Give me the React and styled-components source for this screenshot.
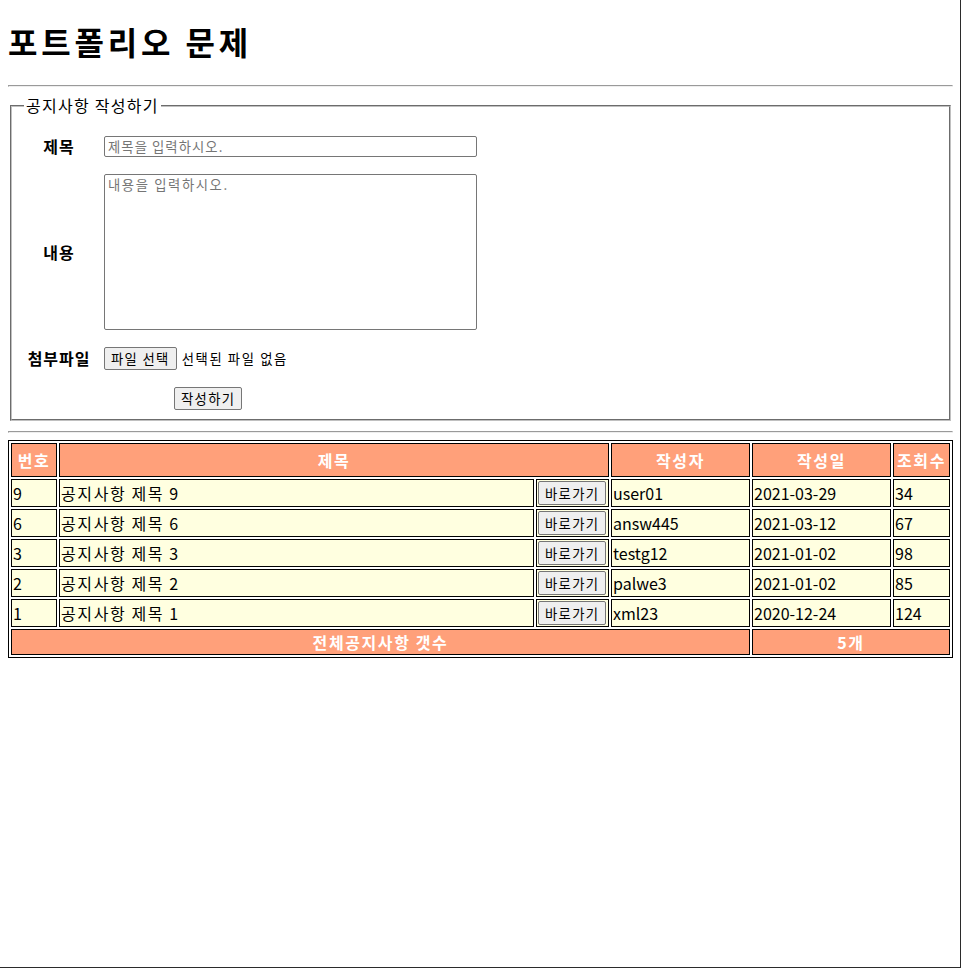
import React from 'react';
import styled, {createGlobalStyle} from 'styled-components';

const GlobalStyle = createGlobalStyle`
    html, body {
        margin: 0;
        padding: 0;
        background: #fff;
        overflow: hidden;
    }
    body {
        font-family: "Noto Sans CJK KR", "Noto Sans", sans-serif;
        font-size: 16px;
        line-height: 1.33;
        letter-spacing: 0.1em;
        color: #000;
    }
`;

const Page = styled.div`
    box-sizing: border-box;
    min-height: 100vh;
    padding: 0 7px 0 8px;
    border-right: 1px solid #2b2b2b;
    border-bottom: 1px solid #2b2b2b;
    display: flow-root;
`;

const Title = styled.h1`
    margin: 20px 0 22px;
    font-size: 32px;
    line-height: 43px;
    font-weight: bold;
    letter-spacing: 0.12em;
`;

const Divider = styled.hr`
    margin: ${({$gap}) => $gap || '8px 0'};
    border: 1px inset;
    color: gray;
    height: 0;
`;

const Fieldset = styled.fieldset`
    margin: 0 2px;
    padding: 20px 12px 9px;
    border: 2px groove #c0c0c0;
`;

const Legend = styled.legend`
    padding: 0 2px;
    font-size: 16px;
    line-height: 21px;
    letter-spacing: 0.08em;
`;

const FormGrid = styled.div`
    display: grid;
    grid-template-columns: 66px auto;
    justify-content: start;
    align-items: center;
    column-gap: 12px;
    row-gap: 17px;
    padding-left: 2px;
`;

const Label = styled.div`
    font-weight: bold;
    text-align: center;
    font-size: 16px;
    letter-spacing: 0.06em;
`;

const TextInput = styled.input`
    box-sizing: border-box;
    width: 373px;
    height: 21px;
    padding: 1px 3px;
    border: 1px solid #767676;
    border-radius: 2px;
    font-family: "Noto Sans CJK KR", sans-serif;
    font-size: 13.33px;
    letter-spacing: 0.08em;
    &::placeholder { color: #757575; }
`;

const TextArea = styled.textarea`
    box-sizing: border-box;
    width: 373px;
    height: 156px;
    padding: 2px 3px;
    border: 1px solid #767676;
    border-radius: 2px;
    font-family: "Noto Sans CJK KR", monospace;
    font-size: 13.33px;
    letter-spacing: 1.6px;
    line-height: 1.2;
    resize: none;
    &::placeholder { color: #757575; }
`;

const FileRow = styled.div`
    display: flex;
    align-items: center;
    gap: 5px;
    font-size: 13.33px;
`;

const Button = styled.button`
    box-sizing: border-box;
    height: ${({$h}) => $h || '23px'};
    padding: 0 ${({$px}) => $px || '6px'};
    margin-left: ${({$offset}) => $offset || '0'};
    background: #efefef;
    border: 1px solid #767676;
    border-radius: 2px;
    font-family: "Noto Sans CJK KR", sans-serif;
    font-size: 13.33px;
    letter-spacing: 0.1em;
    line-height: 1;
    color: #000;
    cursor: pointer;
`;

const Board = styled.div`
    display: grid;
    grid-template-columns: 46px 1fr 73px 139px 139px 57px;
    gap: 2px;
    padding: 2px;
    border: 1px solid #000;
`;

const Cell = styled.div`
    box-sizing: border-box;
    height: 28px;
    padding: 0 1px;
    border: 1px solid #000;
    background: #ffffe0;
    display: flex;
    align-items: center;
    white-space: nowrap;
    font-size: 16px;
    letter-spacing: ${({$plain}) => ($plain ? 'normal' : '0.1em')};
`;

const HeadCell = styled(Cell)`
    height: ${({$h}) => $h || '34px'};
    grid-column: span ${({$span}) => $span || 1};
    justify-content: center;
    background: #ffa07a;
    color: #fff;
    font-weight: bold;
`;

const notices = [
    {no: 9, title: '공지사항 제목 9', writer: 'user01', date: '2021-03-29', views: 34},
    {no: 6, title: '공지사항 제목 6', writer: 'answ445', date: '2021-03-12', views: 67},
    {no: 3, title: '공지사항 제목 3', writer: 'testg12', date: '2021-01-02', views: 98},
    {no: 2, title: '공지사항 제목 2', writer: 'palwe3', date: '2021-01-02', views: 85},
    {no: 1, title: '공지사항 제목 1', writer: 'xml23', date: '2020-12-24', views: 124},
];

export default function App() {
    return (
        <Page>
            <GlobalStyle/>
            <Title>포트폴리오 문제</Title>
            <Divider/>
            <Fieldset>
                <Legend>공지사항 작성하기</Legend>
                <FormGrid>
                    <Label>제목</Label>
                    <TextInput placeholder="제목을 입력하시오."/>
                    <Label>내용</Label>
                    <TextArea placeholder="내용을 입력하시오."/>
                    <Label>첨부파일</Label>
                    <FileRow>
                        <Button type="button" $px="6px">파일 선택</Button>
                        <span>선택된 파일 없음</span>
                    </FileRow>
                    <div/>
                    <div>
                        <Button type="button" $offset="70px">작성하기</Button>
                    </div>
                </FormGrid>
            </Fieldset>
            <Divider $gap="10px 0 7px"/>
            <Board>
                <HeadCell>번호</HeadCell>
                <HeadCell $span={2}>제목</HeadCell>
                <HeadCell>작성자</HeadCell>
                <HeadCell>작성일</HeadCell>
                <HeadCell>조회수</HeadCell>
                {notices.map(n => (
                    <React.Fragment key={n.no}>
                        <Cell $plain>{n.no}</Cell>
                        <Cell>{n.title}</Cell>
                        <Cell>
                            <Button type="button" $h="24px" $px="6px">바로가기</Button>
                        </Cell>
                        <Cell $plain>{n.writer}</Cell>
                        <Cell $plain>{n.date}</Cell>
                        <Cell $plain>{n.views}</Cell>
                    </React.Fragment>
                ))}
                <HeadCell $span={4} $h="26px">전체공지사항 갯수</HeadCell>
                <HeadCell $span={2} $h="26px">{notices.length}개</HeadCell>
            </Board>
        </Page>
    );
}
